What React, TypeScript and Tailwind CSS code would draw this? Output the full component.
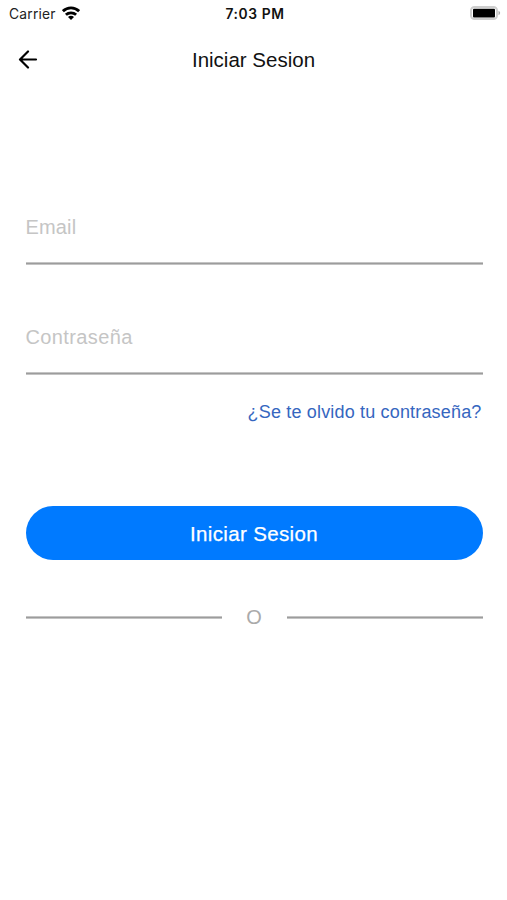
export default function App() {
  return (
    <main className="flex h-[900px] w-[507px] flex-col bg-white font-['Liberation_Sans',sans-serif] text-black">
      <div className="grid h-7 grid-cols-3 items-center pr-[6px] pl-[9px] font-['Inter',sans-serif] text-[13.8px]">
        <div className="flex items-center gap-[6px] text-[#222]">
          <span className="tracking-[0.22px]">Carrier</span>
          <svg className="mb-[2px] h-[14px] w-[18px] text-black" viewBox="0 0 18 14" fill="none" stroke="currentColor" strokeWidth="2.8">
            <path d="M.9 5.200C5.500.7 12.500.7 17.100 5.200M3.900 8.800c2.800-2.600 7.400-2.600 10.200 0" />
            <path d="M6 10.900c1.700-1.500 4.300-1.500 6 0L9 13.900z" fill="currentColor" stroke="none" />
          </svg>
        </div>
        <span className="text-center font-semibold tracking-[0.58px] text-[#111]">7:03 PM</span>
        <svg className="mb-[2px] h-[14px] w-[31px] justify-self-end" viewBox="0 0 31 14">
          <rect x="1" y="1" width="26" height="12" rx="3.500" fill="none" stroke="#cecece" strokeWidth="2" />
          <rect x="3" y="2.800" width="22" height="8.700" rx="1" />
          <path d="M28.500 4.800v4.400c2.200-.8 2.200-3.600 0-4.400" fill="#aaa" />
        </svg>
      </div>
      <header className="grid h-[64px] grid-cols-3 items-center px-[18px]">
        <svg className="mb-[2px] h-[20px] w-[20px]" viewBox="0 0 20 20" fill="none" stroke="currentColor" strokeWidth="2.200" strokeLinecap="round" strokeLinejoin="round">
          <path d="M18 10.500H2.500M10 2.500L2 10.500l8 8" />
        </svg>
        <h1 className="pt-px text-center text-[20.500px] whitespace-nowrap text-[#111]">Iniciar Sesion</h1>
      </header>
      <form className="flex flex-col pr-[24.500px] pl-[25.500px] pt-[110px]">
        <input placeholder="Email" className="h-[62px] border-b border-[#9c9c9c] pb-[10px] text-[20px] tracking-[0.15px] shadow-[0_1px_0_#c4c4c4,inset_0_-1px_0_#c4c4c4] placeholder:text-[#c5c5c5]" />
        <input placeholder="Contraseña" className="mt-[48px] h-[62px] border-b border-[#9c9c9c] pb-[10px] text-[20px] tracking-[0.38px] shadow-[0_1px_0_#c4c4c4,inset_0_-1px_0_#c4c4c4] placeholder:text-[#c5c5c5]" />
        <a className="mt-[25px] self-end pr-px text-[18px] leading-[26px] tracking-[0.17px] text-[#3566c0]">¿Se te olvido tu contraseña?</a>
        <button type="button" className="mt-[81px] h-[54px] rounded-full bg-[#007aff] pt-[3px] text-[20.500px] tracking-[0.36px] text-white [-webkit-text-stroke:0.25px_white]">Iniciar Sesion</button>
        <div className="mt-[42px] flex items-center text-[#aaa]">
          <span className="h-[3px] flex-1 border-y border-[#c4c4c4] bg-[#9c9c9c]" />
          <span className="w-[65px] text-center text-[20px]">O</span>
          <span className="h-[3px] flex-1 border-y border-[#c4c4c4] bg-[#9c9c9c]" />
        </div>
      </form>
    </main>
  );
}
